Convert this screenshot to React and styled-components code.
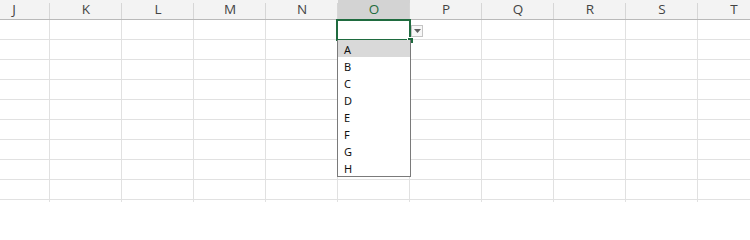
import React from "react";
import styled, { createGlobalStyle } from "styled-components";

const Global = createGlobalStyle`
  html, body { margin: 0; padding: 0; background: #fff; overflow: hidden; }
  body { font-family: "Open Sans", "Noto Sans", sans-serif; }
`;

const Viewport = styled.div`
  width: 750px;
  height: 202px;
  overflow: hidden;
  background: #fff;
`;

const Sheet = styled.div`
  display: grid;
  grid-template-columns: repeat(${(p) => p.$cols}, 72px);
  grid-auto-rows: 20px;
  margin-left: -22px;
  width: max-content;
`;

const HeaderCell = styled.div`
  position: relative;
  box-sizing: border-box;
  height: 20px;
  background: ${(p) => (p.$active ? "#d3d3d3" : "#f3f3f3")};
  border-bottom: 1px solid ${(p) => (p.$active ? "#a0a0a0" : "#b9b9b9")};
  color: ${(p) => (p.$active ? "#1e6b3c" : "#444")};
  font-size: 13.5px;
  line-height: 19px;
  text-align: center;
  &::after {
    content: "";
    position: absolute;
    right: 0;
    top: 3px;
    bottom: 0;
    width: 1px;
    background: #d6d6d6;
  }
`;

const Cell = styled.div`
  position: relative;
  box-sizing: border-box;
  border-right: 1px solid #e1e1e1;
  border-bottom: 1px solid #e1e1e1;
`;

const Selection = styled.div`
  position: absolute;
  left: -2px;
  top: -1px;
  width: 75px;
  height: 22px;
  box-sizing: border-box;
  border: 2px solid #1f6b3f;
  z-index: 2;
`;

const FillHandle = styled.div`
  position: absolute;
  right: -4px;
  bottom: -4px;
  width: 5px;
  height: 5px;
  background: #1f6b3f;
  border: 1px solid #fff;
  border-right: none;
  border-bottom: none;
`;

const DropButton = styled.div`
  position: absolute;
  left: 73px;
  top: 5px;
  width: 12px;
  height: 12px;
  box-sizing: border-box;
  border: 1px solid #c4c4c4;
  background: #f7f7f7;
  display: flex;
  align-items: center;
  justify-content: center;
  z-index: 2;
`;

const ListBox = styled.ul`
  position: absolute;
  left: -1px;
  top: 20px;
  width: 74px;
  height: 137px;
  box-sizing: border-box;
  margin: 0;
  padding: 0;
  list-style: none;
  border: 1px solid #7a7a7a;
  border-top: none;
  background: #fff;
  z-index: 3;
`;

const ListItem = styled.li`
  box-sizing: border-box;
  height: 17px;
  padding: 2px 0 0 6px;
  line-height: 15px;
  font-family: "Noto Sans", "Open Sans", sans-serif;
  font-size: 11px;
  color: #111;
  background: ${(p) => (p.$hover ? "#d9d9d9" : "transparent")};
`;

const cols = ["J", "K", "L", "M", "N", "O", "P", "Q", "R", "S", "T"];
const items = ["A", "B", "C", "D", "E", "F", "G", "H"];
const ROWS = 10;

export default function App() {
  return (
    <Viewport>
      <Global />
      <Sheet $cols={cols.length}>
        {cols.map((c) => (
          <HeaderCell key={c} $active={c === "O"}>
            {c}
          </HeaderCell>
        ))}
        {Array.from({ length: ROWS }).map((_, r) =>
          cols.map((c) => (
            <Cell key={`${c}${r}`}>
              {r === 0 && c === "O" && (
                <>
                  <Selection>
                    <FillHandle />
                  </Selection>
                  <DropButton>
                    <svg width="7" height="4" viewBox="0 0 7 4">
                      <path d="M0 0 H7 L3.5 4 Z" fill="#606060" />
                    </svg>
                  </DropButton>
                  <ListBox>
                    {items.map((it, i) => (
                      <ListItem key={it} $hover={i === 0}>
                        {it}
                      </ListItem>
                    ))}
                  </ListBox>
                </>
              )}
            </Cell>
          ))
        )}
      </Sheet>
    </Viewport>
  );
}
